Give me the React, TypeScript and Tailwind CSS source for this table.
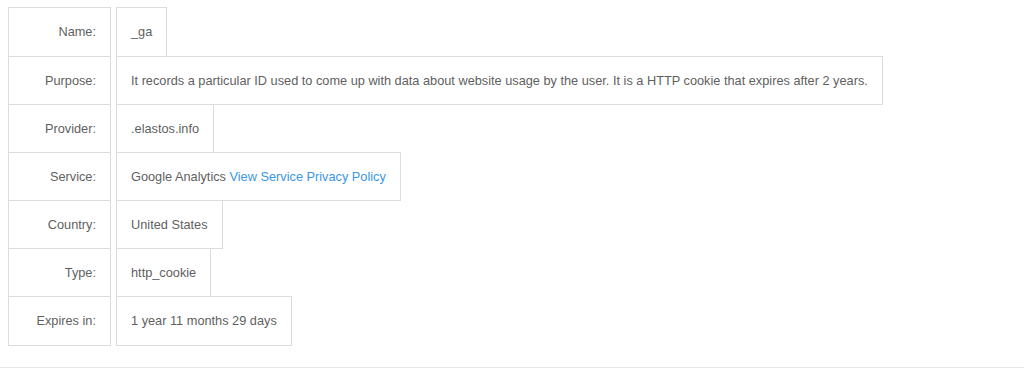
import React from "react";

const rows: { label: string; value: React.ReactNode }[] = [
  { label: "Name:", value: "_ga" },
  {
    label: "Purpose:",
    value:
      "It records a particular ID used to come up with data about website usage by the user. It is a HTTP cookie that expires after 2 years.",
  },
  { label: "Provider:", value: ".elastos.info" },
  {
    label: "Service:",
    value: (
      <>
        Google Analytics <span className="text-[#3a96e6]">View Service Privacy Policy</span>
      </>
    ),
  },
  { label: "Country:", value: "United States" },
  { label: "Type:", value: "http_cookie" },
  { label: "Expires in:", value: "1 year 11 months 29 days" },
];

export default function App() {
  return (
    <div
      className="w-[1024px] h-[369px] bg-white relative text-[12.75px] text-[#5f5f5f]"
      style={{ fontFamily: '"Liberation Sans", Arial, sans-serif' }}
    >
      <div className="pt-[7px] pl-[8px] flex flex-col">
        {rows.map((r, i) => {
          const h = i === 0 || i === rows.length - 1 ? "h-[50px]" : "h-[49px]";
          return (
            <div key={i} className={`flex gap-[5px] ${i > 0 ? "-mt-px" : ""}`}>
              <div className={`w-[103px] ${h} border border-[#dcdcdc] flex items-center justify-end pr-[14px] shrink-0`}>
                <span>{r.label}</span>
              </div>
              <div className={`${h} border border-[#dcdcdc] flex items-center px-[14px] whitespace-nowrap`}>
                <span>{r.value}</span>
              </div>
            </div>
          );
        })}
      </div>
      <div className="absolute left-0 right-0 top-[367px] h-px bg-[#e8e8e8]" />
    </div>
  );
}
